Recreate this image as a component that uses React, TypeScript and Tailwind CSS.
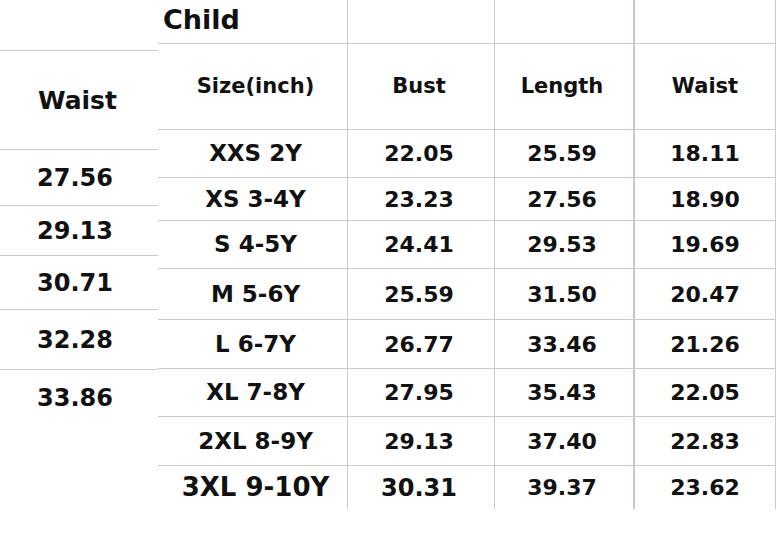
const font = { fontFamily: '"DejaVu Sans", "Liberation Sans", sans-serif' }

const leftRows = [
  { value: '27.56', h: 'h-[56px]' },
  { value: '29.13', h: 'h-[50px]' },
  { value: '30.71', h: 'h-[54px]' },
  { value: '32.28', h: 'h-[60px]' },
]

const rows = [
  { size: 'XXS 2Y', bust: '22.05', length: '25.59', waist: '18.11', h: 'h-[48px]' },
  { size: 'XS 3-4Y', bust: '23.23', length: '27.56', waist: '18.90', h: 'h-[43px]' },
  { size: 'S 4-5Y', bust: '24.41', length: '29.53', waist: '19.69', h: 'h-[48px]' },
  { size: 'M 5-6Y', bust: '25.59', length: '31.50', waist: '20.47', h: 'h-[51px]' },
  { size: 'L 6-7Y', bust: '26.77', length: '33.46', waist: '21.26', h: 'h-[49px]' },
  { size: 'XL 7-8Y', bust: '27.95', length: '35.43', waist: '22.05', h: 'h-[48px]' },
  { size: '2XL 8-9Y', bust: '29.13', length: '37.40', waist: '22.83', h: 'h-[49px]' },
]

// column edges follow the sheet: 347, 494, 633 (double, bluish), 775
const cols = 'grid grid-cols-[190px_147px_140px_141px]'
const c1 = 'flex items-center justify-center border-r border-[#cacaca] pl-[6px]'
const c2 = 'flex items-center justify-center border-r border-[#cacaca] pr-[4px]'
const c3 = 'flex items-center justify-center border-r-2 border-[#c4c7da] pr-[4px]'
const c4 = 'flex items-center justify-center border-r border-[#cacaca]'

export default function App() {
  return (
    <div className="flex h-[555px] w-[776px] bg-white font-bold text-[#111]" style={font}>
      <div className="flex w-[158px] flex-col">
        <div className="h-[51px] border-b border-[#cacaca]" />
        <div className="flex h-[99px] items-center border-b border-[#cacaca] pl-[38px] pt-[2px] text-[25px]">Waist</div>
        {leftRows.map((r) => (
          <div key={r.value} className={`flex ${r.h} items-center border-b border-[#cacaca] pl-[37px] text-[24px]`}>
            {r.value}
          </div>
        ))}
        <div className="flex h-[56px] items-center pl-[37px] text-[24px]">33.86</div>
      </div>

      <div className="flex flex-col">
        <div className={`${cols} h-[44px] border-b border-[#cacaca]`}>
          <div className="flex items-center border-r border-[#cacaca] pl-[5px] pb-[2px] text-[27px]">Child</div>
          <div className="border-r border-[#cacaca]" />
          <div className="border-r-2 border-[#c4c7da]" />
          <div className="border-r border-[#cacaca]" />
        </div>
        <div className={`${cols} h-[86px] border-b border-[#cacaca] text-[21px]`}>
          <div className={c1}>Size(inch)</div>
          <div className={c2}>Bust</div>
          <div className={c3}>Length</div>
          <div className={c4}>Waist</div>
        </div>
        {rows.map((r) => (
          <div key={r.size} className={`${cols} ${r.h} border-b border-[#cacaca] text-[22px]`}>
            <div className={`${c1} text-[23px]`}>{r.size}</div>
            <div className={c2}>{r.bust}</div>
            <div className={c3}>{r.length}</div>
            <div className={c4}>{r.waist}</div>
          </div>
        ))}
        <div className={`${cols} h-[43px] text-[22px]`}>
          <div className={`${c1} text-[26px]`}>3XL 9-10Y</div>
          <div className={`${c2} text-[24px]`}>30.31</div>
          <div className={c3}>39.37</div>
          <div className={c4}>23.62</div>
        </div>
      </div>
    </div>
  )
}
